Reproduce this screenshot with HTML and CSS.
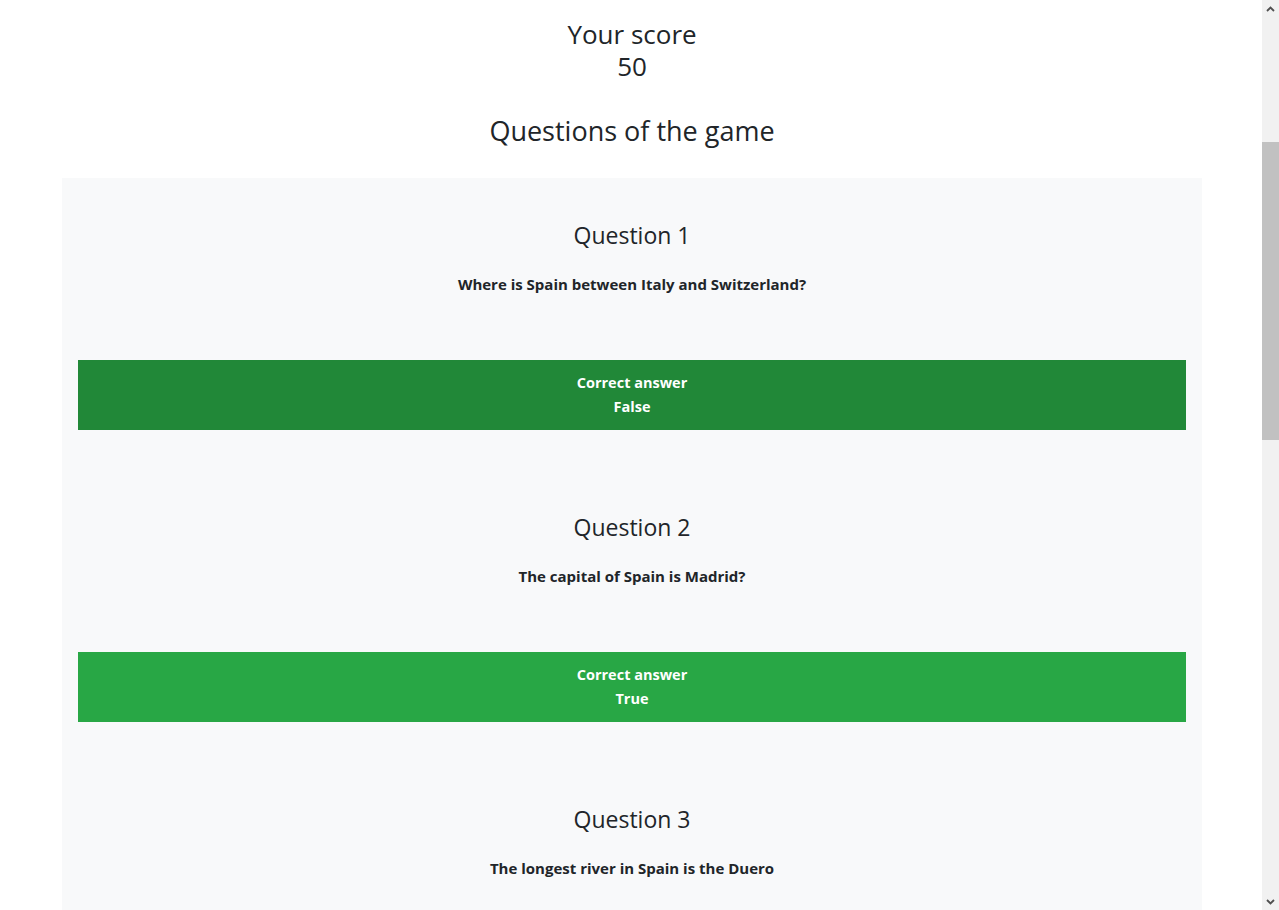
FILE: index.html
```html
<!DOCTYPE html>
<html lang="en">
<head>
<meta charset="utf-8">
<title>Results</title>
<link rel="stylesheet" href="styles.css">
</head>
<body>
<main class="page">
  <header class="score">
    <div class="score-label">Your score</div>
    <div class="score-value">50</div>
  </header>
  <h2 class="section-title">Questions of the game</h2>
  <section class="questions">
    <article class="question">
      <h4 class="q-title">Question 1</h4>
      <p class="q-text">Where is Spain between Italy and Switzerland?</p>
      <div class="answer answer-dark">
        <div>Correct answer</div>
        <div>False</div>
      </div>
    </article>
    <article class="question">
      <h4 class="q-title">Question 2</h4>
      <p class="q-text">The capital of Spain is Madrid?</p>
      <div class="answer">
        <div>Correct answer</div>
        <div>True</div>
      </div>
    </article>
    <article class="question">
      <h4 class="q-title">Question 3</h4>
      <p class="q-text">The longest river in Spain is the Duero</p>
      <div class="answer">
        <div>Correct answer</div>
        <div>False</div>
      </div>
    </article>
    <article class="question">
      <h4 class="q-title">Question 4</h4>
      <p class="q-text">Spain has more than 40 million inhabitants?</p>
      <div class="answer">
        <div>Correct answer</div>
        <div>True</div>
      </div>
    </article>
  </section>
</main>
<div class="scrollbar" aria-hidden="true">
  <div class="sb-arrow sb-up">
    <svg width="9" height="6" viewBox="0 0 9 6"><path d="M1 5 L4.5 1.5 L8 5" fill="none" stroke="#505050" stroke-width="1.8"/></svg>
  </div>
  <div class="sb-track">
    <div class="sb-thumb"></div>
  </div>
  <div class="sb-arrow sb-down">
    <svg width="9" height="6" viewBox="0 0 9 6"><path d="M1 1 L4.5 4.5 L8 1" fill="none" stroke="#505050" stroke-width="1.8"/></svg>
  </div>
</div>
</body>
</html>
```

FILE: styles.css
```css
html, body {
  margin: 0;
  padding: 0;
  background: #ffffff;
}

body {
  font-family: "Segoe UI", "Open Sans", "Noto Sans", sans-serif;
  color: #212529;
  padding-right: 17px;
}

.page {
  max-width: 1140px;
  margin: 0 auto;
  transform: translateX(1px);
}

.score {
  padding-top: 18px;
  text-align: center;
  font-size: 26px;
  line-height: 32px;
}

.section-title {
  margin: 33px 0 31px;
  text-align: center;
  font-size: 27px;
  line-height: 32px;
  font-weight: 400;
}

.questions {
  background: #f8f9fa;
  padding: 0 16px;
}

.question {
  display: flex;
  flex-direction: column;
  align-items: stretch;
  padding-top: 43px;
  padding-bottom: 83px;
  text-align: center;
}

.question:not(:first-child) {
  padding-top: 0;
}

.q-title {
  margin: 0;
  font-size: 23px;
  line-height: 28px;
  font-weight: 400;
}

.q-text {
  margin: 23px 0 64px;
  font-size: 15px;
  line-height: 24px;
  font-weight: 700;
}

.answer {
  background: #28a745;
  color: #ffffff;
  padding: 11px 0;
  font-size: 14.5px;
  line-height: 24px;
  font-weight: 700;
}

.answer-dark {
  background: #218838;
}

.scrollbar {
  position: fixed;
  top: 0;
  right: 0;
  bottom: 0;
  width: 17px;
  background: #f1f1f1;
  display: flex;
  flex-direction: column;
}

.sb-arrow {
  height: 17px;
  display: flex;
  align-items: center;
  justify-content: center;
}

.sb-track {
  flex: 1;
  padding-top: 125px;
}

.sb-thumb {
  height: 298px;
  background: #c1c1c1;
}
```
